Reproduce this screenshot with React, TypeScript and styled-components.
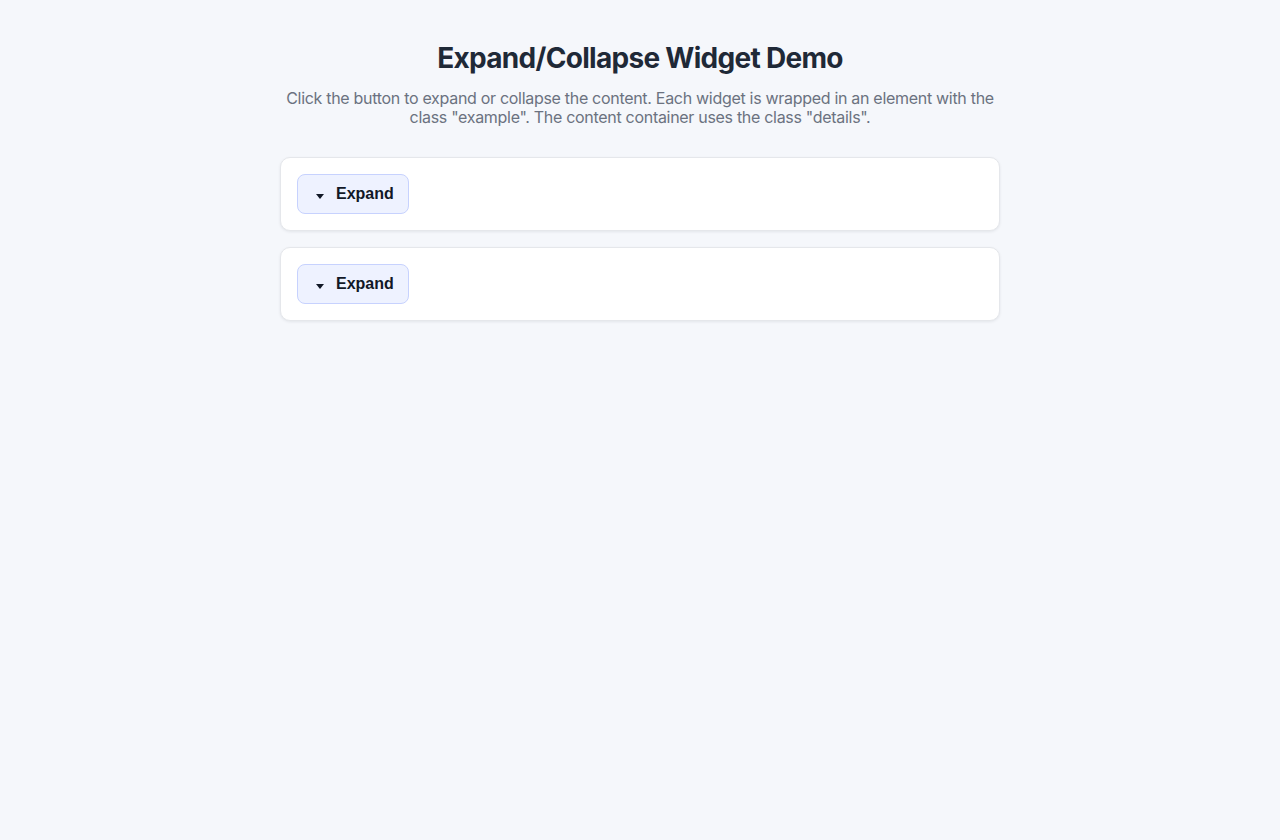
import React, { useState } from 'react';
import styled, { createGlobalStyle } from 'styled-components';

const GlobalStyle = createGlobalStyle`
  html, body {
    margin: 0;
    padding: 0;
    background: #f5f7fb;
    font-family: Inter, "Noto Sans", sans-serif;
  }
`

const widgets = [
  { id: 1, text: 'This is the hidden content of the first widget.' },
  { id: 2, text: 'This is the hidden content of the second widget.' },
];

const Widget = ({ text }: { text: string }) => {
  const [open, setOpen] = useState(false);
  return (
    <Example className="example">
      <ToggleButton onClick={() => setOpen(!open)}>
        <Caret open={open} />
        {open ? 'Collapse' : 'Expand'}
      </ToggleButton>
      {open && <Details className="details">{text}</Details>}
    </Example>
  );
};

const App = () => {
  return (
    <>
      <GlobalStyle />
      <Page>
        <Title>Expand/Collapse Widget Demo</Title>
        <Intro>
          Click the button to expand or collapse the content. Each widget is wrapped in an element with the
          class "example". The content container uses the class "details".
        </Intro>
        <List>
          {widgets.map((w) => (
            <Widget key={w.id} text={w.text} />
          ))}
        </List>
      </Page>
    </>
  );
};

export default App;

const Page = styled.div`
  max-width: 720px;
  margin: 0 auto;
  padding: 41px 0;
`
const Title = styled.h1`
  margin: 0;
  font-size: 28px;
  line-height: 34px;
  font-weight: 700;
  letter-spacing: -0.7px;
  color: #1f2937;
  text-align: center;
`
const Intro = styled.p`
  margin: 14px 0 30px;
  font-size: 16px;
  line-height: 19px;
  letter-spacing: -0.3px;
  color: #6b7280;
  text-align: center;
`
const List = styled.div`
  display: flex;
  flex-direction: column;
  gap: 16px;
`
const Example = styled.div`
  background: #ffffff;
  border: 1px solid #e5e7eb;
  border-radius: 10px;
  padding: 16px;
  box-shadow: 0 1px 3px rgba(17, 24, 39, 0.08);
`
const ToggleButton = styled.button`
  display: inline-flex;
  align-items: center;
  height: 40px;
  padding: 0 14px 0 18px;
  background: #eef2ff;
  border: 1px solid #c7d2fe;
  border-radius: 8px;
  font-family: "Liberation Sans", Arial, sans-serif;
  font-size: 16px;
  font-weight: 700;
  color: #111827;
  cursor: pointer;
`
const Caret = styled.span<{ open: boolean }>`
  width: 0;
  height: 0;
  margin: 5px 12px 0 0;
  border-left: 4.5px solid transparent;
  border-right: 4.5px solid transparent;
  border-top: 5px solid #111827;
  transform: ${(p) => (p.open ? 'rotate(180deg)' : 'none')};
`
const Details = styled.div`
  margin-top: 12px;
  font-size: 15px;
  color: #374151;
`
